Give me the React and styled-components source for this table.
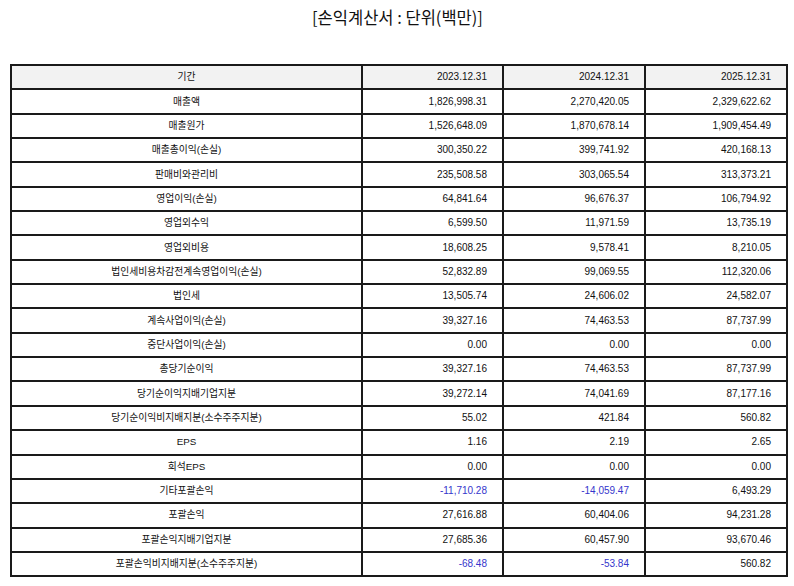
import React from "react";
import styled, { createGlobalStyle } from "styled-components";

const GlobalStyle = createGlobalStyle`
    body {
        margin: 0;
        background: #ffffff;
        font-family: "Liberation Sans", "Noto Sans CJK KR", sans-serif;
        color: #111111;
    }
`;

const rows = [
    ["매출액", "1,826,998.31", "2,270,420.05", "2,329,622.62"],
    ["매출원가", "1,526,648.09", "1,870,678.14", "1,909,454.49"],
    ["매출총이익(손실)", "300,350.22", "399,741.92", "420,168.13"],
    ["판매비와관리비", "235,508.58", "303,065.54", "313,373.21"],
    ["영업이익(손실)", "64,841.64", "96,676.37", "106,794.92"],
    ["영업외수익", "6,599.50", "11,971.59", "13,735.19"],
    ["영업외비용", "18,608.25", "9,578.41", "8,210.05"],
    ["법인세비용차감전계속영업이익(손실)", "52,832.89", "99,069.55", "112,320.06"],
    ["법인세", "13,505.74", "24,606.02", "24,582.07"],
    ["계속사업이익(손실)", "39,327.16", "74,463.53", "87,737.99"],
    ["중단사업이익(손실)", "0.00", "0.00", "0.00"],
    ["총당기순이익", "39,327.16", "74,463.53", "87,737.99"],
    ["당기순이익지배기업지분", "39,272.14", "74,041.69", "87,177.16"],
    ["당기순이익비지배지분(소수주주지분)", "55.02", "421.84", "560.82"],
    ["EPS", "1.16", "2.19", "2.65"],
    ["희석EPS", "0.00", "0.00", "0.00"],
    ["기타포괄손익", "-11,710.28", "-14,059.47", "6,493.29"],
    ["포괄손익", "27,616.88", "60,404.06", "94,231.28"],
    ["포괄손익지배기업지분", "27,685.36", "60,457.90", "93,670.46"],
    ["포괄손익비지배지분(소수주주지분)", "-68.48", "-53.84", "560.82"],
];

const Page = styled.div`
    width: 794px;
    padding: 4px 9px 0 10px;
    box-sizing: border-box;
`;

const Title = styled.h1`
    margin: 0;
    height: 60px;
    font-family: "Noto Sans CJK KR", sans-serif;
    font-size: 16.5px;
    font-weight: 400;
    line-height: 26px;
    text-align: center;
    color: #111111;
`;

const Table = styled.table`
    width: 776px;
    border-collapse: collapse;
    table-layout: fixed;
    font-size: 10px;
`;

const Row = styled.tr`
    height: 24.35px;
    background: ${(props) => (props.head ? "#f2f2f2" : "#ffffff")};
`;

const Cell = styled.td`
    border: 2px solid #1a1a1a;
    padding: 0 15px;
    line-height: 14px;
    font-size: ${(props) => (props.label ? "9.8px" : "10px")};
    text-align: ${(props) => (props.label ? "center" : "right")};
    color: ${(props) => (props.negative ? "#3535cc" : "#111111")};
    white-space: nowrap;
`;

function App() {
    return (
        <Page>
            <GlobalStyle />
            <Title>[손익계산서 : 단위(백만)]</Title>
            <Table>
                <colgroup>
                    <col style={{ width: "351px" }} />
                    <col style={{ width: "141px" }} />
                    <col style={{ width: "142px" }} />
                    <col style={{ width: "142px" }} />
                </colgroup>
                <tbody>
                    <Row head>
                        <Cell label>기간</Cell>
                        <Cell>2023.12.31</Cell>
                        <Cell>2024.12.31</Cell>
                        <Cell>2025.12.31</Cell>
                    </Row>
                    {rows.map((row) => (
                        <Row key={row[0]}>
                            <Cell label>{row[0]}</Cell>
                            {row.slice(1).map((value, i) => (
                                <Cell key={i} negative={value.startsWith("-")}>
                                    {value}
                                </Cell>
                            ))}
                        </Row>
                    ))}
                </tbody>
            </Table>
        </Page>
    );
}

export default App;
